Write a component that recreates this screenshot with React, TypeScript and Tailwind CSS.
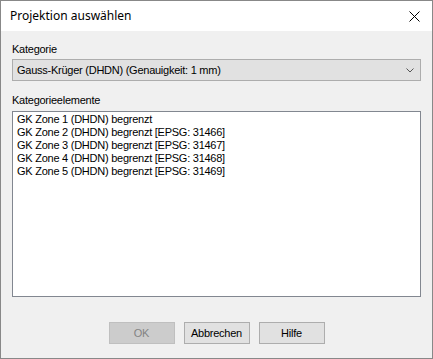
export default function App() {
  const items = [
    "GK Zone 1 (DHDN) begrenzt",
    "GK Zone 2 (DHDN) begrenzt [EPSG: 31466]",
    "GK Zone 3 (DHDN) begrenzt [EPSG: 31467]",
    "GK Zone 4 (DHDN) begrenzt [EPSG: 31468]",
    "GK Zone 5 (DHDN) begrenzt [EPSG: 31469]",
  ];

  return (
    <div className="flex h-[359px] w-[433px] flex-col border border-[#888888] bg-[#f0f0f0] font-['Liberation_Sans',Arial,sans-serif] text-[11px] text-black">
      {/* Title bar */}
      <div className="flex h-[30px] items-center justify-between bg-white pl-[9px] pr-[12px]">
        <span className="font-['Noto_Sans',sans-serif] text-[12px]">Projektion auswählen</span>
        <svg width="11" height="11" viewBox="0 0 11 11">
          <path d="M0.5 0.5 L10.5 10.5 M10.5 0.5 L0.5 10.5" stroke="#000" strokeWidth="1" />
        </svg>
      </div>

      {/* Body */}
      <div className="flex flex-col px-[11px] pt-[12px] tracking-[-0.25px]">
        <div className="leading-[13px]">Kategorie</div>
        <div className="mt-[3px] flex h-[22px] items-center justify-between border border-[#adadad] bg-[#e1e1e1] pl-[4px] pr-[6px]">
          <span>Gauss-Krüger (DHDN) (Genauigkeit: 1 mm)</span>
          <svg width="8" height="5" viewBox="0 0 8 5">
            <path d="M0.5 0.5 L4 4 L7.5 0.5" fill="none" stroke="#555" strokeWidth="1" />
          </svg>
        </div>

        <div className="mt-[13px] leading-[13px]">Kategorieelemente</div>
        <div className="mt-[4px] flex h-[186px] flex-col border border-[#828790] bg-white px-[4px] pt-[1px]">
          {items.map((item) => (
            <div key={item} className="leading-[13px]">
              {item}
            </div>
          ))}
        </div>

        <div className="mt-[25px] flex justify-center gap-[9px]">
          <button className="h-[22px] w-[66px] border border-[#bfbfbf] bg-[#cccccc] text-[#838383]" disabled>
            OK
          </button>
          <button className="h-[22px] w-[66px] border border-[#adadad] bg-[#e1e1e1]">Abbrechen</button>
          <button className="h-[22px] w-[66px] border border-[#adadad] bg-[#e1e1e1]">Hilfe</button>
        </div>
      </div>
    </div>
  );
}
